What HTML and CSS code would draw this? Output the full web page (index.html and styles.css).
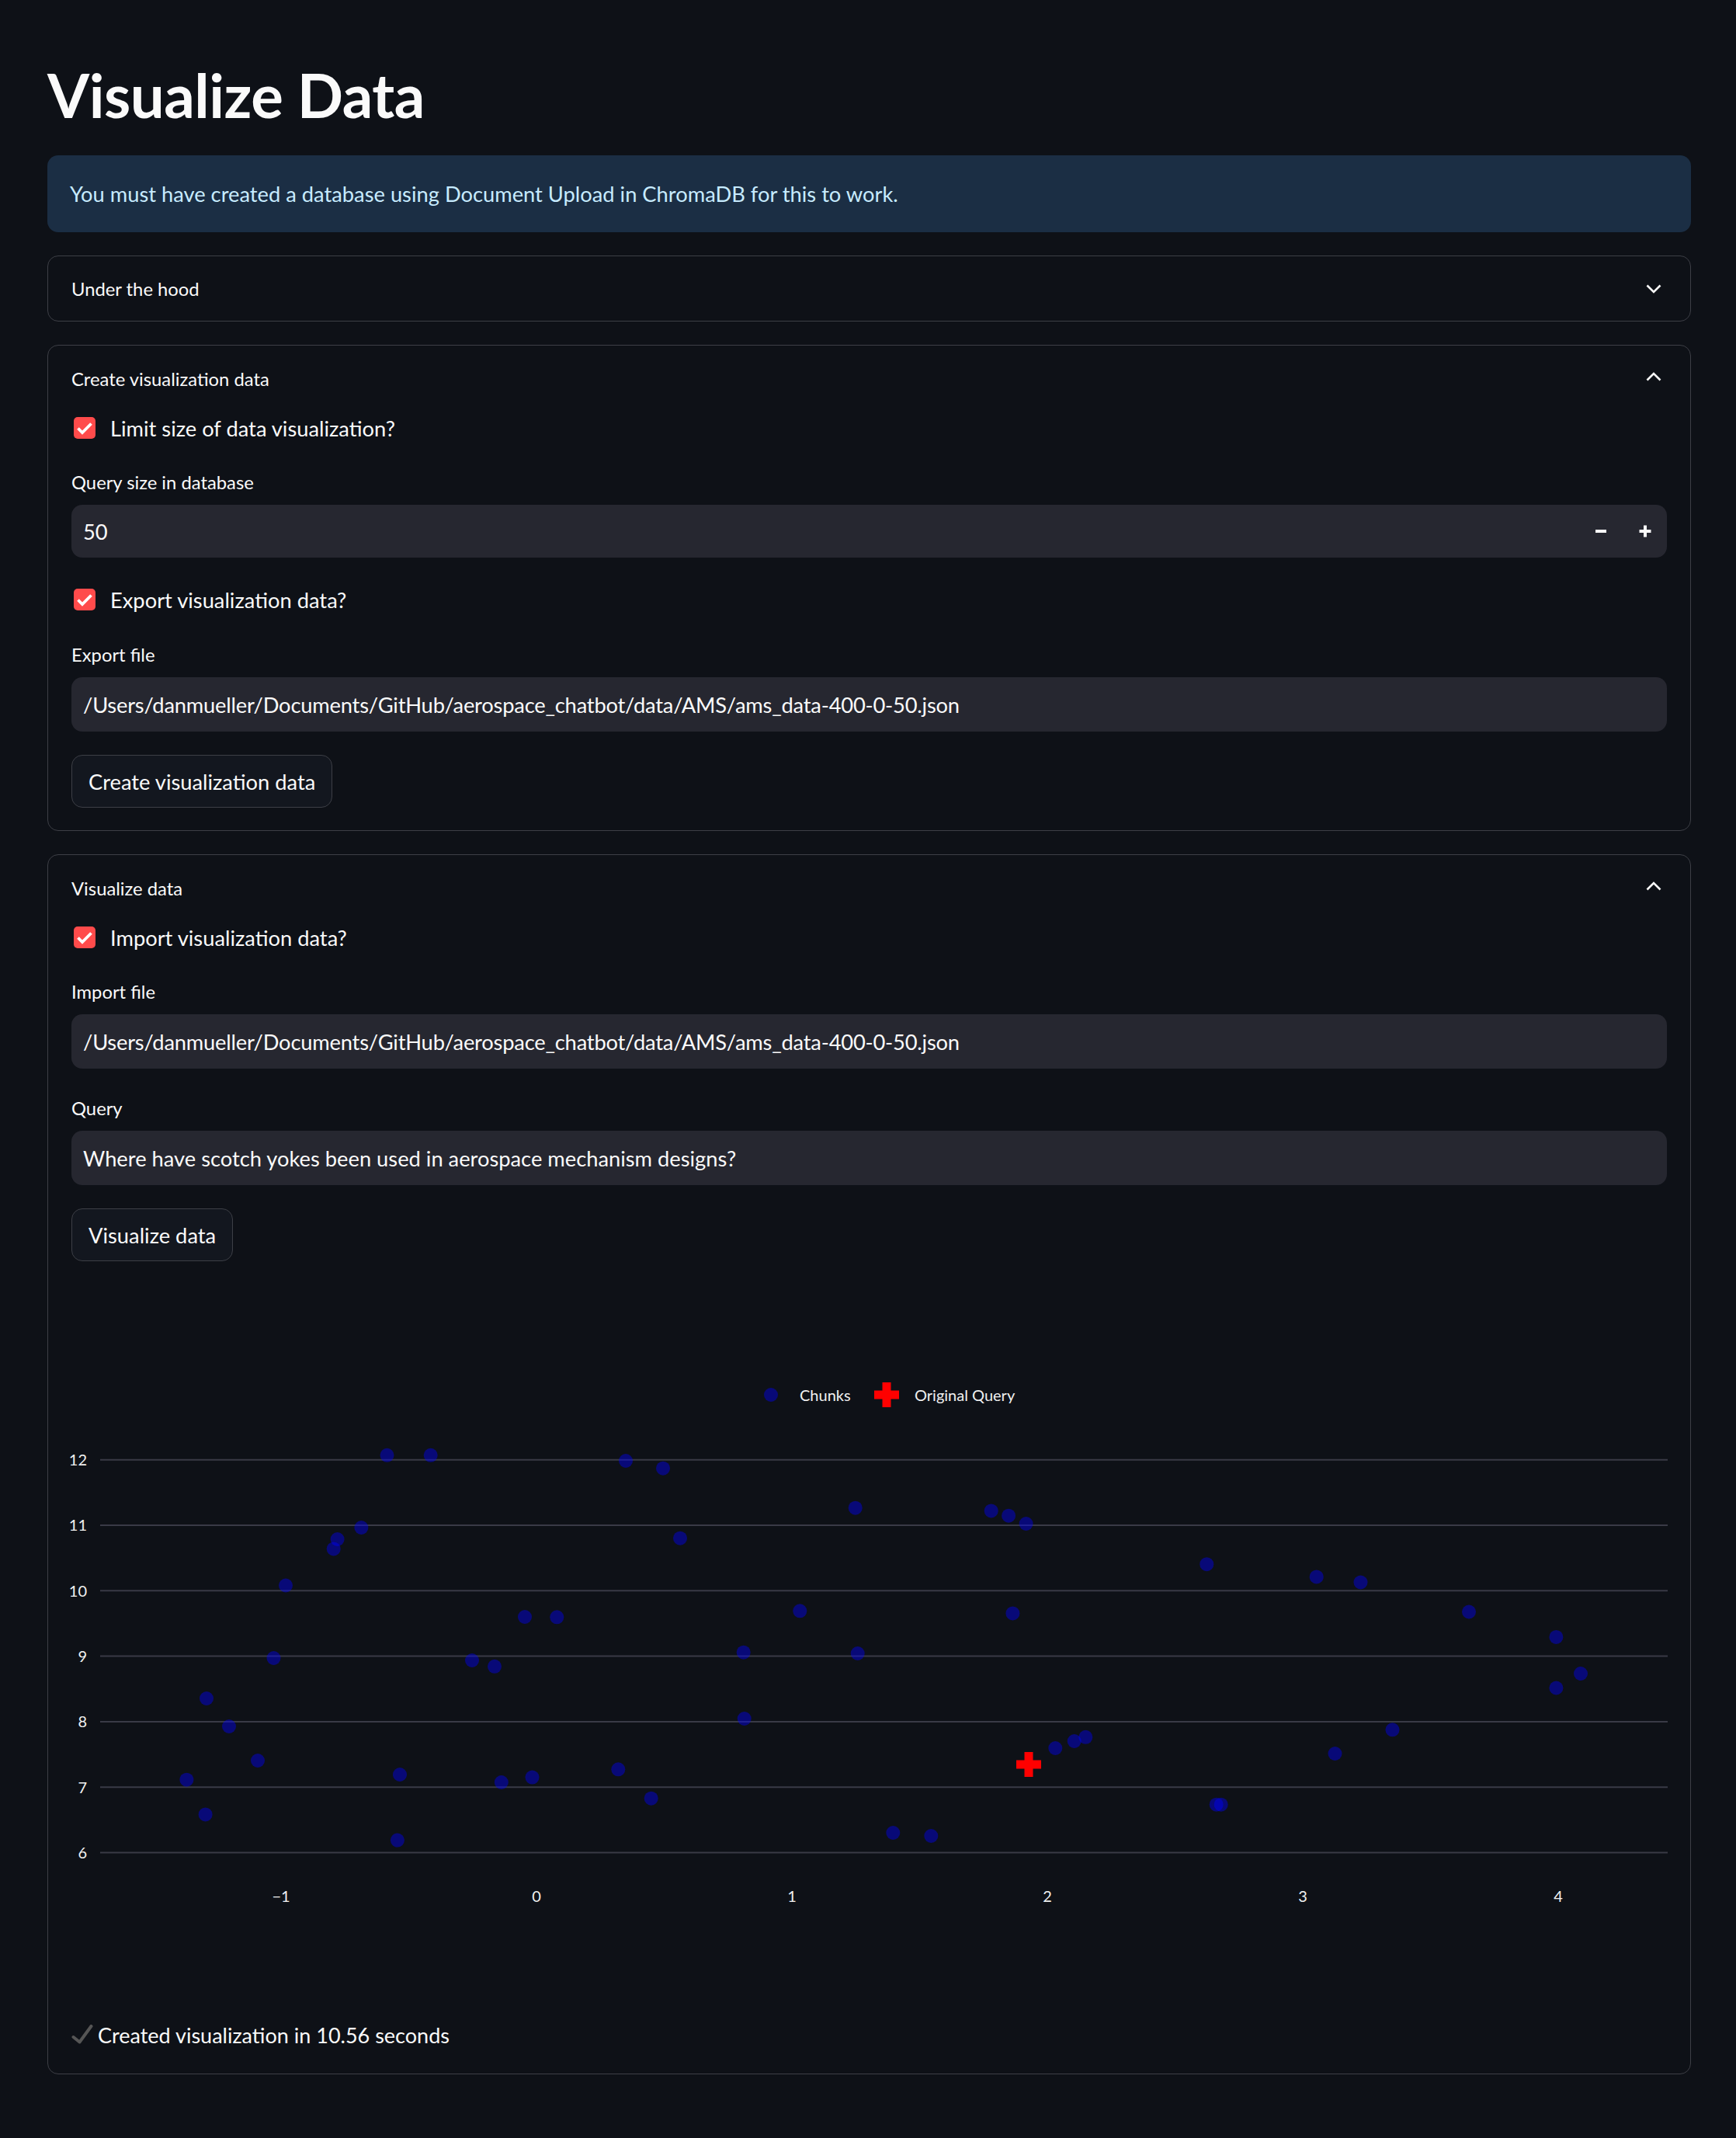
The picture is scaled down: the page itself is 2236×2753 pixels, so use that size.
FILE: index.html
```html
<!DOCTYPE html>
<html lang="en">
<head>
<meta charset="utf-8">
<title>Visualize Data</title>
<link rel="stylesheet" href="styles.css">
</head>
<body>
<main class="page">
  <h1 class="title">Visualize Data</h1>

  <div class="alert">You must have created a database using Document Upload in ChromaDB for this to work.</div>

  <section class="expander">
    <div class="exp-head">
      <span>Under the hood</span>
      <svg class="chev" width="20" height="12" viewBox="0 0 20 12"><path d="M1.5 1.5 L10 10 L18.5 1.5"/></svg>
    </div>
  </section>

  <section class="expander open">
    <div class="exp-head">
      <span>Create visualization data</span>
      <svg class="chev up" width="20" height="12" viewBox="0 0 20 12"><path d="M1.5 10.5 L10 2 L18.5 10.5"/></svg>
    </div>
    <div class="exp-body">
      <div class="check-row">
        <span class="cbox"><svg width="28" height="28" viewBox="0 0 28 28"><path d="M5.5 14.5 L11 20 L22.5 8.5"/></svg></span>
        <span>Limit size of data visualization?</span>
      </div>
      <div class="field sp-28">
        <div class="field-label">Query size in database</div>
        <div class="input number">
          <span class="value">50</span>
          <div class="steps">
            <span class="step"><svg width="16" height="16" viewBox="0 0 16 16"><rect x="1" y="6" width="14" height="4"/></svg></span>
            <span class="step"><svg width="16" height="16" viewBox="0 0 16 16"><rect x="0.5" y="6" width="15" height="4"/><rect x="6" y="0.5" width="4" height="15"/></svg></span>
          </div>
        </div>
      </div>
      <div class="check-row sp-33">
        <span class="cbox"><svg width="28" height="28" viewBox="0 0 28 28"><path d="M5.5 14.5 L11 20 L22.5 8.5"/></svg></span>
        <span>Export visualization data?</span>
      </div>
      <div class="field sp-29">
        <div class="field-label">Export file</div>
        <div class="input path">/Users/danmueller/Documents/GitHub/aerospace_chatbot/data/AMS/ams_data-400-0-50.json</div>
      </div>
      <button class="btn sp-30">Create visualization data</button>
    </div>
  </section>

  <section class="expander open">
    <div class="exp-head">
      <span>Visualize data</span>
      <svg class="chev up" width="20" height="12" viewBox="0 0 20 12"><path d="M1.5 10.5 L10 2 L18.5 10.5"/></svg>
    </div>
    <div class="exp-body">
      <div class="check-row">
        <span class="cbox"><svg width="28" height="28" viewBox="0 0 28 28"><path d="M5.5 14.5 L11 20 L22.5 8.5"/></svg></span>
        <span>Import visualization data?</span>
      </div>
      <div class="field sp-28">
        <div class="field-label">Import file</div>
        <div class="input path">/Users/danmueller/Documents/GitHub/aerospace_chatbot/data/AMS/ams_data-400-0-50.json</div>
      </div>
      <div class="field sp-30">
        <div class="field-label">Query</div>
        <div class="input">Where have scotch yokes been used in aerospace mechanism designs?</div>
      </div>
      <button class="btn sp-30">Visualize data</button>

      <svg class="chart sp-28" width="2055" height="919" viewBox="0 0 2055 919">
        <g class="legend">
          <circle class="dot" cx="901" cy="144" r="9"/>
          <text x="938" y="152">Chunks</text>
          <path class="cross" d="M1044.5 128 h11 v10.5 h10.5 v11 h-10.5 v10.5 h-11 v-10.5 h-10.5 v-11 h10.5 z"/>
          <text x="1086" y="152">Original Query</text>
        </g>
        <g class="grid">
          <line x1="37" x2="2056" y1="227.7" y2="227.7"/>
          <line x1="37" x2="2056" y1="312" y2="312"/>
          <line x1="37" x2="2056" y1="396.3" y2="396.3"/>
          <line x1="37" x2="2056" y1="480.6" y2="480.6"/>
          <line x1="37" x2="2056" y1="564.9" y2="564.9"/>
          <line x1="37" x2="2056" y1="649.2" y2="649.2"/>
          <line x1="37" x2="2056" y1="733.5" y2="733.5"/>
        </g>
        <g class="ticks ytick">
          <text x="20" y="235">12</text>
          <text x="20" y="319.3">11</text>
          <text x="20" y="403.6">10</text>
          <text x="20" y="487.9">9</text>
          <text x="20" y="572.2">8</text>
          <text x="20" y="656.5">7</text>
          <text x="20" y="740.8">6</text>
        </g>
        <g class="ticks xtick">
          <text x="270" y="796.5">−1</text>
          <text x="599" y="796.5">0</text>
          <text x="928" y="796.5">1</text>
          <text x="1257" y="796.5">2</text>
          <text x="1586" y="796.5">3</text>
          <text x="1915" y="796.5">4</text>
        </g>
        <g class="points">
          <circle class="dot" cx="406.5" cy="221.8" r="9"/>
          <circle class="dot" cx="462.7" cy="221.8" r="9"/>
          <circle class="dot" cx="373.4" cy="315" r="9"/>
          <circle class="dot" cx="342.6" cy="330" r="9"/>
          <circle class="dot" cx="337.7" cy="342.4" r="9"/>
          <circle class="dot" cx="276" cy="389.5" r="9"/>
          <circle class="dot" cx="584" cy="430" r="9"/>
          <circle class="dot" cx="625.3" cy="430.3" r="9"/>
          <circle class="dot" cx="260.5" cy="483" r="9"/>
          <circle class="dot" cx="516" cy="486" r="9"/>
          <circle class="dot" cx="545" cy="493.8" r="9"/>
          <circle class="dot" cx="174" cy="535" r="9"/>
          <circle class="dot" cx="203" cy="571" r="9"/>
          <circle class="dot" cx="240" cy="615" r="9"/>
          <circle class="dot" cx="148.4" cy="639.7" r="9"/>
          <circle class="dot" cx="423" cy="633" r="9"/>
          <circle class="dot" cx="553.8" cy="643" r="9"/>
          <circle class="dot" cx="593.5" cy="636.6" r="9"/>
          <circle class="dot" cx="172.6" cy="684.4" r="9"/>
          <circle class="dot" cx="419.9" cy="717.6" r="9"/>
          <circle class="dot" cx="714" cy="229" r="9"/>
          <circle class="dot" cx="762" cy="238.7" r="9"/>
          <circle class="dot" cx="1009.7" cy="289.7" r="9"/>
          <circle class="dot" cx="784" cy="328.7" r="9"/>
          <circle class="dot" cx="938.3" cy="422.3" r="9"/>
          <circle class="dot" cx="865.7" cy="475.7" r="9"/>
          <circle class="dot" cx="1012.7" cy="477" r="9"/>
          <circle class="dot" cx="866.7" cy="561" r="9"/>
          <circle class="dot" cx="704.3" cy="626.3" r="9"/>
          <circle class="dot" cx="746.7" cy="663.7" r="9"/>
          <circle class="dot" cx="1058.3" cy="708" r="9"/>
          <circle class="dot" cx="1107.3" cy="712" r="9"/>
          <circle class="dot" cx="1184.7" cy="293.4" r="9"/>
          <circle class="dot" cx="1207.1" cy="299.7" r="9"/>
          <circle class="dot" cx="1229.6" cy="310" r="9"/>
          <circle class="dot" cx="1462.3" cy="362.2" r="9"/>
          <circle class="dot" cx="1603.7" cy="378.4" r="9"/>
          <circle class="dot" cx="1660.5" cy="385.5" r="9"/>
          <circle class="dot" cx="1212.4" cy="425.4" r="9"/>
          <circle class="dot" cx="1800" cy="423.5" r="9"/>
          <circle class="dot" cx="1912.4" cy="455.9" r="9"/>
          <circle class="dot" cx="1944" cy="503" r="9"/>
          <circle class="dot" cx="1912.4" cy="521.5" r="9"/>
          <circle class="dot" cx="1701.5" cy="575.3" r="9"/>
          <circle class="dot" cx="1306.3" cy="584.8" r="9"/>
          <circle class="dot" cx="1291.7" cy="590" r="9"/>
          <circle class="dot" cx="1267.3" cy="599" r="9"/>
          <circle class="dot" cx="1627.5" cy="606" r="9"/>
          <circle class="dot" cx="1474.7" cy="671.7" r="9"/>
          <circle class="dot" cx="1480.7" cy="671.7" r="9"/>
        </g>
        <path class="cross" d="M1227.5 604 h11 v10.5 h10.5 v11 h-10.5 v10.5 h-11 v-10.5 h-10.5 v-11 h10.5 z"/>
      </svg>

      <div class="status sp-28">
        <svg width="28" height="26" viewBox="0 0 28 26"><path d="M2.5 16 L10.5 22.5 L25.5 2"/></svg>
        <span>Created visualization in 10.56 seconds</span>
      </div>
    </div>
  </section>
</main>
</body>
</html>
```

FILE: styles.css
```css
html, body {
  margin: 0;
  background: #0e1117;
}

body {
  color: #fafafa;
  font-family: Lato, "Noto Sans", sans-serif;
}

.page {
  box-sizing: border-box;
  min-height: 2753px;
  padding: 77px 58px 0 61px;
}

.title {
  margin: 0 0 32px;
  font-size: 78px;
  line-height: 91px;
  font-weight: 700;
  letter-spacing: -0.5px;
}

.alert {
  box-sizing: border-box;
  height: 99px;
  display: flex;
  align-items: center;
  padding: 0 29px;
  margin-bottom: 30px;
  border-radius: 14px;
  background: #1b2e44;
  color: #c7ebff;
  font-size: 27.3px;
}

.expander {
  border: 1px solid #3d3f46;
  border-radius: 14px;
  margin-bottom: 30px;
}

.exp-head {
  height: 83px;
  display: flex;
  align-items: center;
  justify-content: space-between;
  padding: 0 37px 0 30px;
  font-size: 23.8px;
}

.open .exp-head {
  height: 85px;
}

.chev path {
  fill: none;
  stroke: #fafafa;
  stroke-width: 2.6;
}

.chev.up {
  margin-top: -6px;
}

.exp-body {
  display: flex;
  flex-direction: column;
  padding: 0 30px 29px;
}

.sp-28 { margin-top: 28px; }
.sp-29 { margin-top: 29px; }
.sp-30 { margin-top: 30px; }
.sp-33 { margin-top: 33px; }

.check-row {
  height: 42px;
  display: flex;
  align-items: center;
  gap: 19px;
  font-size: 27.3px;
}

.cbox {
  width: 28px;
  height: 28px;
  margin-left: 3px;
  border-radius: 5px;
  background: #ff4b4b;
  display: flex;
}

.cbox path {
  fill: none;
  stroke: #ffffff;
  stroke-width: 3.8;
}

.field-label {
  height: 42px;
  line-height: 42px;
  margin-bottom: 8px;
  font-size: 23.8px;
}

.input {
  box-sizing: border-box;
  height: 70px;
  display: flex;
  align-items: center;
  padding: 0 15px;
  border-radius: 14px;
  background: #262730;
  font-size: 27.3px;
  white-space: nowrap;
}

.input.path {
  letter-spacing: -0.2px;
}

.input.number {
  height: 68px;
  padding-right: 0;
  justify-content: space-between;
}

.steps {
  display: flex;
  height: 100%;
}

.step {
  width: 57px;
  display: flex;
  align-items: center;
  justify-content: center;
}

.step rect {
  fill: #fafafa;
}

.btn {
  align-self: flex-start;
  box-sizing: border-box;
  height: 68px;
  padding: 0 21px;
  border: 1px solid #3d3f46;
  border-radius: 14px;
  background: #13171f;
  color: #fafafa;
  font-family: Lato, "Noto Sans", sans-serif;
  font-size: 27.3px;
}

.chart {
  display: block;
  overflow: visible;
  font-family: Lato, "Noto Sans", sans-serif;
}

.chart text {
  font-size: 20px;
  fill: #f0f0f0;
}

.ytick text {
  text-anchor: end;
}

.xtick text {
  text-anchor: middle;
}

.grid line {
  stroke: #393a46;
  stroke-width: 2;
}

.dot {
  fill: #0000ff;
  fill-opacity: 0.42;
}

.cross {
  fill: #ff0000;
}

.status {
  height: 42px;
  display: flex;
  align-items: center;
  gap: 6px;
  font-size: 27px;
}

.status path {
  fill: none;
  stroke: #555555;
  stroke-width: 4;
  stroke-linecap: round;
  stroke-linejoin: round;
}
```
